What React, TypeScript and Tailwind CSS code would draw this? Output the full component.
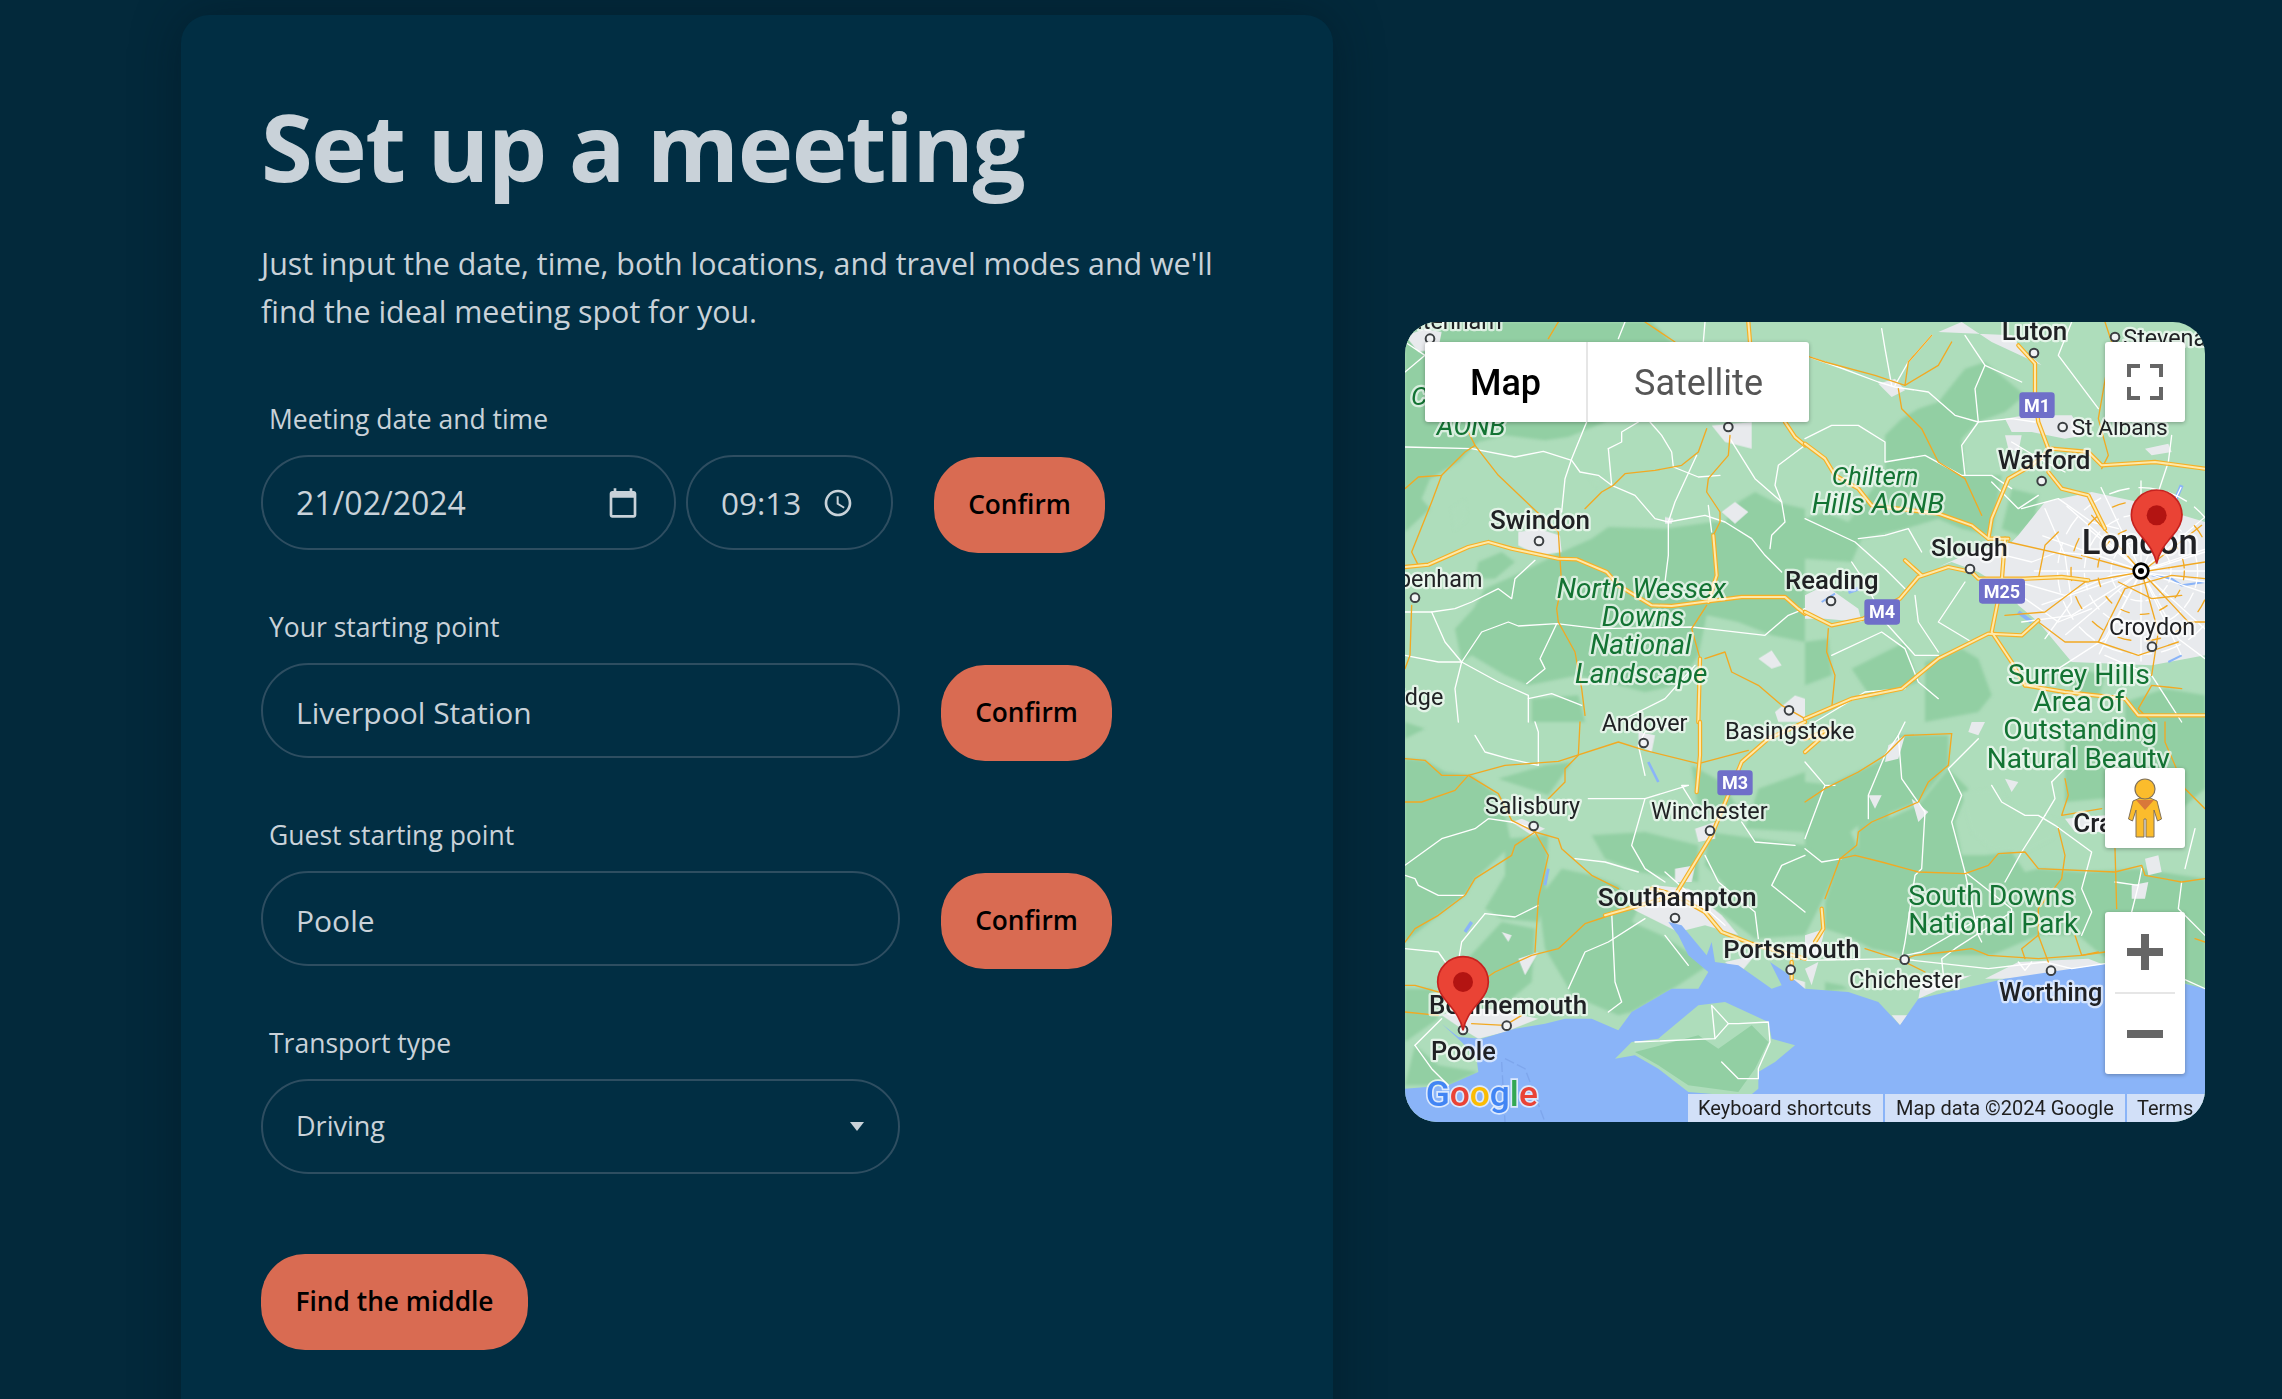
import React from 'react';

// map data is written in 3x tile coordinates, one block per quadrant (each 1200 wide)
type Quad = {
  ox: number;
  oy: number;
  dark: string[];
  light?: string[];
  urban: string[];
  minor: string[];
  sec: string[];
  motor: string[];
};

const quads: Quad[] = [
  {
    ox: 0,
    oy: 0,
    dark: [
      '0,0 740,0 800,60 800,110 600,300 490,345 420,355 300,340 220,360 160,420 75,470 50,530 75,560 0,630',
      '470,690 560,650 610,615 780,620 920,600 960,600 1000,540 1050,510 1110,540 1200,560 1200,960 1100,940 1000,900 905,880 880,1000 820,1090 720,1110 520,1060 370,1090 300,1060 200,1000 170,1020 150,920 205,860 240,800 330,760',
      '380,1130 520,1120 540,1200 380,1200',
      '220,720 290,690 330,720 270,770 210,770',
    ],
    light: ['140,560 180,535 185,590 150,625', '550,460 600,470 575,495'],
    urban: [
      '340,630 400,620 465,640 470,690 400,700 340,670',
      '950,570 990,540 1030,570 990,605',
      '0,40 60,20 110,30 100,80 40,90',
      '920,310 1040,300 1040,380 960,360',
      '1110,1170 1170,1120 1200,1130 1200,1200 1120,1200',
      '1060,1010 1100,985 1130,1030 1100,1040',
      '780,585 805,590 800,605 780,605',
    ],
    minor: [
      '0,375 200,380 330,405 415,388 500,415 525,450 580,460 620,490 690,520 750,590 790,600 900,580 960,600 1040,650 1080,700 1130,750',
      '545,300 500,410 480,470 470,570',
      '610,380 650,360 650,330 700,300',
      '610,380 620,490',
      '735,300 770,340 800,390 805,435 880,465 945,460',
      '875,400 810,540 790,600 790,700 780,780',
      '975,350 1050,470 1130,540 1140,600 1100,640 1095,680',
      '1200,370 1120,430 1110,490 1130,540',
      '910,550 920,630',
      '0,870 80,870 150,860 200,840 280,800 320,830 330,770 390,715',
      '80,870 120,960 170,1020 280,1080 370,1120 370,1200',
      '170,1020 230,930 310,900 340,912 455,905 580,920 860,915 950,925 1080,940 1150,880 1200,860',
      '455,905 405,1010 420,1040 365,1085',
      '370,1130 440,1115 530,1150',
      '640,1200 780,1130 870,1030',
      '0,1000 100,1020 170,1020 150,1100 160,1200',
      '0,150 60,100 0,60',
      '900,0 895,60',
      '660,0 640,50',
    ],
    sec: [
      '905,320 880,390 830,430 750,445 660,455 625,490 590,510 540,560',
      '975,340 970,400 910,470 905,510 945,570 945,600 925,640',
      '0,500 40,465 110,460 180,390 210,370 280,460 380,555 460,630 465,710 470,790 455,860 460,900 510,990 530,1100 540,1180',
      '110,460 80,540 20,690 40,730',
      '210,370 190,330',
      '460,0 430,50',
      '720,0 810,60',
      '900,1010 960,990 980,1050 1060,1090 1130,1150 1200,1190',
      '905,850 860,920 885,1010',
      '20,850 15,1000 0,1040',
    ],
    motor: [
      '0,735 70,728 190,675 250,660 320,680 460,710 515,712 605,750 640,790 740,850 800,852 910,838 1010,825 1140,825 1180,860 1200,875',
      '925,640 935,760 910,840',
      '885,1010 880,1200',
      '1030,0 1035,60',
      '1140,300 1170,345 1200,370',
    ],
  },
  {
    ox: 1200,
    oy: 0,
    dark: [
      '240,340 290,290 340,260 400,240 480,140 540,120 660,220 600,270 520,300 470,350 480,460 590,460 560,640 470,620 400,590 300,620 170,650 140,720 0,710 0,590 60,570 130,600 240,450',
      '360,1020 470,980 520,1010 560,1120 520,1170 360,1200',
      '0,960 70,950 80,1060 0,1090',
      '620,500 700,520 690,590 640,640 590,620',
      '960,1140 1080,1100 1200,1120 1200,1200 960,1200',
      '140,1040 300,960 340,1080 200,1130',
      '820,1040 900,1060 880,1130 800,1100',
    ],
    urban: [
      '640,640 720,540 860,510 1000,540 1200,600 1200,1000 1040,1030 800,1020 700,900 640,850 600,800 520,750 440,720 400,735 500,690 620,660',
      '600,290 660,280 800,280 840,340 780,350 680,330 620,330',
      '1020,380 1090,365 1100,390 1040,400',
      '0,820 60,790 160,860 170,900 60,890 0,890',
      '220,185 270,170 300,205 260,225',
      '400,30 470,0 560,60 710,130 650,80 620,40',
      '600,340 650,340 640,390 610,380',
    ],
    minor: [
      '230,20 240,80 260,190',
      '380,40 310,120 270,190',
      '0,100 100,135 220,180 270,195 370,210 450,280 520,300 620,290 690,300',
      '0,350 80,310 160,310 240,360 240,420 360,400 470,460 560,460 620,500',
      '540,130 510,200 520,300 470,370 480,460',
      '480,40 540,130 650,180',
      '0,590 150,660 240,740 300,800',
      '160,650 240,640 310,620 350,690',
      '140,720 180,780 240,900 330,1000 400,1000',
      '330,820 340,900 400,990',
      '480,780 400,900 500,960',
      '80,1000 230,930 300,980 340,1080 400,1130',
      '650,560 760,530 860,600 940,620',
      '720,560 780,700 800,840 720,950',
      '640,780 780,820 920,760 1010,750',
      '850,620 1010,750 1200,690',
      '1010,750 1120,950 1200,1010',
      '1010,750 900,950 760,1040',
      '1010,750 1200,780',
      '650,900 800,880 1010,750',
      '900,1000 1040,1060 1130,1200',
      '800,0 760,100 880,260',
      '1100,340 1090,420 1060,510',
      '30,1200 180,1110 300,1100',
      '600,700 680,720 760,690 860,700',
      '660,830 760,900 860,860',
      '560,480 640,560 700,520',
      '620,360 720,420 780,450',
    ],
    sec: [
      '380,40 310,120 300,190 210,160 60,120 0,100',
      '300,190 400,130 440,60',
      '280,200 290,260 350,320 400,420 480,470 530,580',
      '610,660 830,710',
      '860,580 1010,750 1190,610',
      '830,700 1010,750 1200,720',
      '700,770 720,670 760,630',
      '600,880 720,870 840,780 1010,750 1060,930 1040,1060',
      '880,960 960,800 1100,760 1200,770',
      '700,900 780,960 880,960 1000,1000 1120,960',
      '1010,750 1150,900 1200,900',
      '940,780 1040,830 1130,820',
      '70,920 65,990 90,1060 80,1160',
      '900,0 920,60 880,290 910,400 890,440',
      '1130,1100 1040,1090 1000,1160 1040,1200',
    ],
    motor: [
      '0,365 60,410 90,460 160,500 200,550 400,575 500,610 550,650 610,650',
      '0,870 80,910 175,890 285,830 340,765 430,735 500,750 520,770 660,770 770,765 850,775',
      '300,715 350,760',
      '550,650 560,590 610,470 680,430 740,380 850,390 890,430 1050,420 1200,440',
      '690,125 690,230 700,300 730,380',
      '640,70 690,125',
      '730,450 770,500 850,520 900,620',
      '600,650 590,780 560,930 620,1020 660,1090',
      '0,1190 140,1130 290,1100 400,1010 550,935 650,940 700,895',
      '660,1090 780,1110 960,1130 1000,1180 1200,1180',
    ],
  },
  {
    ox: 0,
    oy: 1200,
    dark: [
      '0,110 60,115 120,150 200,160 290,230 320,370 210,470 180,520 100,580 0,660',
      '400,530 470,440 560,460 640,490 700,560 680,600 770,640 910,730 820,790 680,870 640,880 500,820 480,780 420,680',
      '560,340 720,330 800,350 880,370 880,480 700,450 600,410',
      '910,330 1200,370 1200,640 1050,650 930,560 960,490 900,430',
      '0,800 80,800 100,890 0,960',
      '30,970 100,1030 220,1050 130,1090 0,1090',
      '280,170 420,130 500,120 430,220',
      '160,740 290,600 390,620 380,780 260,880 200,860',
      '0,0 60,20 0,50',
      '300,350 430,340 420,530 400,600 290,590 240,560 300,460',
      '860,130 950,180 1000,260 930,300 880,260',
      '1060,200 1200,150 1200,330 1020,320',
    ],
    urban: [
      '680,560 750,490 850,500 950,580 1000,640 900,610 820,630 740,590',
      '110,880 160,860 250,860 350,880 400,890 300,930 220,950 170,920',
      '320,300 350,290 420,320 380,340',
      '870,320 930,300 930,350 880,360',
      '810,440 870,430 860,480 810,480',
      '1130,760 1200,780 1200,810 1150,810',
      '700,30 750,40 740,90 700,70',
      '290,630 320,640 310,660',
      '340,710 400,690 360,760',
      '960,720 1050,700 1000,760',
    ],
    minor: [
      '210,40 240,90 310,110 400,130 400,30 390,0',
      '0,430 110,350 210,320 250,290 320,300',
      '0,460 30,470 40,490 100,520 180,520',
      '320,300 390,320',
      '550,230 720,230 850,190',
      '720,230 680,370 720,440 780,480',
      '510,410 600,420 700,450',
      '780,450 960,610',
      '1010,300 1050,360 1170,370',
      '900,400 940,480 1050,570 1060,650',
      '1200,400 1130,430 1100,490 1200,570',
      '620,570 630,780 650,840 610,870',
      '720,590 610,660 540,690 490,800',
      '240,575 170,660 160,720',
      '240,575 330,585 400,550',
      '0,680 100,690 170,790',
      '30,970 110,890',
      '780,640 850,730',
      '30,970 80,1040 130,1090',
      '850,190 830,190 880,270',
      '720,160 700,70 720,30 840,0',
      '690,960 930,950 970,905 1000,905 1090,900 1095,960 1060,1040 1060,1070 1000,1070 950,1020',
      '930,950 920,850 970,905',
    ],
    sec: [
      '0,110 60,115 110,160 190,160 280,215 320,295 390,330 430,400 400,530 390,690',
      '0,240 50,240 150,205 190,160 300,130 460,118 640,60 720,85 880,125 1030,85',
      '525,0 520,100 480,140 480,180 430,230',
      '390,330 330,370 320,400 210,470 180,520 100,580 30,620 0,660',
      '390,330 460,350 470,380 560,460 640,500',
      '600,585 540,605 460,680 380,700 270,750 210,790',
      '0,790 30,790 100,810',
      '0,870 100,880',
      '200,905 300,910 350,880',
    ],
    motor: [
      '885,0 885,100 875,210',
      '1200,0 1090,50 1010,120 920,340 810,520 600,580',
      '740,500 780,510 810,520 900,570 950,630 1040,665 1200,710',
      '1160,720 1160,770',
    ],
  },
  {
    ox: 1200,
    oy: 1200,
    dark: [
      '160,310 250,290 340,250 430,140 490,200 450,300 470,400 540,400 620,390 660,450 700,440 830,450 1000,440 1200,470 1200,800 1000,740 890,700 820,640 700,640 560,700 440,700 300,700 200,680 120,640 60,620 60,540 100,420 160,380',
      '0,370 110,410 60,520 0,640',
      '280,40 430,40 430,130 340,240 180,300 200,240 240,120',
      '0,180 90,190 0,310',
      '780,0 1200,0 1200,200 1130,260 1000,220 780,240',
      '60,780 110,790 130,800 60,810',
      '70,190 240,110 280,40 250,290 160,310 90,370 60,290',
      '0,310 70,190 160,380 100,420 0,370',
    ],
    urban: [
      '250,70 300,40 280,110 240,120',
      '190,220 230,220 210,260',
      '600,170 640,180 620,210',
      '320,230 370,270 340,300',
      '780,290 900,280 900,330 810,330',
      '1020,410 1060,400 1070,450 1030,460',
      '980,490 1030,480 1020,530 980,530',
      '640,720 850,710 900,730 700,770 540,770',
      '260,880 310,880 285,910',
      '350,780 500,760 340,830',
      '0,640 60,620 40,700 0,700',
      '0,740 40,720 20,790',
      '500,0 540,0 520,40 490,30',
    ],
    minor: [
      '280,40 240,100 190,220 190,290',
      '300,0 280,40 290,170 360,270 350,440 330,460 300,660 290,710',
      '0,350 60,190 0,120 60,190 90,190',
      '0,380 50,420 110,410',
      '520,50 430,140 470,220 440,300 480,450 520,640 530,660',
      '560,190 590,240 660,280 700,280 750,310 860,390 830,500 860,570 830,640',
      '720,280 650,390 600,480',
      '740,180 750,230 720,280',
      '790,130 740,180',
      '480,450 620,560 620,570',
      '620,570 450,680 410,710 415,760',
      '540,580 350,690 300,700',
      '930,480 1000,490 1010,440',
      '1000,490 980,570 940,610',
      '0,715 280,710 550,740 720,720 800,740 1000,710 1200,800',
      '640,720 660,745 680,720',
      '1130,480 1120,560 1200,640',
      '1170,320 1140,440',
    ],
    sec: [
      '0,240 60,200 160,150 240,100 300,40 440,35',
      '440,35 430,130 370,180 340,240 200,300 160,330 155,370 105,410',
      '105,410 60,530',
      '105,410 150,400 230,420 340,450 480,455 550,430 580,395 660,390 700,440 930,450 1010,430 1020,460 1130,480 1200,470',
      '780,170 790,220 770,280 890,260',
      '760,320 780,400 770,470 700,560 700,640 730,720',
      '930,380 935,560',
      '700,640 650,680 660,710',
      '810,640 830,700 880,690',
      '180,680 290,715 330,700 420,690 500,680 550,700 700,710 830,700 900,690',
      '290,715 360,750',
      '1080,0 1080,60 1140,200 1200,260',
      '1170,650 1200,660',
    ],
    motor: ['50,560 55,620 30,660', '0,50 80,20 0,90'],
  },
];

const sea =
  '0,2300 130,2290 220,2250 215,2210 170,2160 110,2105 160,2145 230,2150 330,2120 420,2105 480,2090 560,2090 640,2125 680,2070 800,2000 880,2000 910,1950 850,1900 820,1840 790,1800 830,1810 905,1900 920,1860 930,1920 1000,1930 1100,2000 1130,1990 1095,1920 1140,1950 1200,2000 1330,2010 1420,2040 1485,2110 1540,2030 1670,2000 1800,1970 2000,1940 2100,1925 2400,2000 2400,2400 0,2400';
const wight =
  '630,2210 680,2160 760,2150 880,2050 960,2040 1090,2100 1100,2150 1170,2170 1110,2220 1060,2250 1060,2300 1030,2325 850,2310 760,2240 690,2200';

type Label = { t: string; x: number; y: number; s?: number; w?: number; a?: 'end'; c?: string; i?: boolean };

const GREEN = '#137333';
const labels: Label[] = [
  { t: 'Cheltenham', x: 290, y: 20, s: 70, a: 'end' },
  { t: 'Swindon', x: 255, y: 620, s: 78, w: 500 },
  { t: 'Chippenham', x: 232, y: 795, s: 70, a: 'end' },
  { t: 'Trowbridge', x: 115, y: 1150, s: 70, a: 'end' },
  { t: 'Andover', x: 590, y: 1228, s: 70 },
  { t: 'C', x: 18, y: 250, s: 78, c: GREEN, i: true },
  { t: 'AONB', x: 95, y: 338, s: 80, c: GREEN, i: true },
  { t: 'North Wessex', x: 455, y: 828, s: 84, c: GREEN, i: true },
  { t: 'Downs', x: 590, y: 912, s: 84, c: GREEN, i: true },
  { t: 'National', x: 555, y: 997, s: 84, c: GREEN, i: true },
  { t: 'Landscape', x: 510, y: 1082, s: 84, c: GREEN, i: true },
  { t: 'Reading', x: 1140, y: 800, s: 77, w: 500 },
  { t: 'Luton', x: 1790, y: 55, s: 78, w: 500 },
  { t: 'Stevenage', x: 2155, y: 72, s: 70 },
  { t: 'St Albans', x: 2000, y: 340, s: 68 },
  { t: 'Watford', x: 1778, y: 440, s: 78, w: 500 },
  { t: 'Chiltern', x: 1280, y: 488, s: 78, c: GREEN, i: true },
  { t: 'Hills AONB', x: 1220, y: 573, s: 84, c: GREEN, i: true },
  { t: 'Slough', x: 1578, y: 703, s: 74, w: 500 },
  { t: 'London', x: 2030, y: 697, s: 104, w: 500 },
  { t: 'Croydon', x: 2112, y: 940, s: 70 },
  { t: 'Surrey Hills', x: 1808, y: 1085, s: 85, c: GREEN },
  { t: 'Area of', x: 1885, y: 1168, s: 85, c: GREEN },
  { t: 'Outstanding', x: 1795, y: 1252, s: 85, c: GREEN },
  { t: 'Natural Beauty', x: 1745, y: 1337, s: 84, c: GREEN },
  { t: 'Salisbury', x: 240, y: 1477, s: 70 },
  { t: 'Winchester', x: 738, y: 1492, s: 70 },
  { t: 'Basingstoke', x: 960, y: 1252, s: 71 },
  { t: 'Southampton', x: 578, y: 1752, s: 79, w: 500 },
  { t: 'Portsmouth', x: 955, y: 1907, s: 77, w: 500 },
  { t: 'Bournemouth', x: 72, y: 2075, s: 78, w: 500 },
  { t: 'Poole', x: 78, y: 2214, s: 76, w: 500 },
  { t: 'Cra', x: 2005, y: 1530, s: 78, w: 500 },
  { t: 'South Downs', x: 1510, y: 1750, s: 85, c: GREEN },
  { t: 'National Park', x: 1510, y: 1834, s: 85, c: GREEN },
  { t: 'Chichester', x: 1332, y: 1998, s: 71 },
  { t: 'Worthing', x: 1782, y: 2037, s: 76, w: 500 },
];

const dots: [number, number][] = [
  [402, 657], [30, 827], [75, 50], [970, 315], [1152, 1165], [716, 1263], [1887, 93], [1973, 315],
  [2130, 45], [1910, 477], [1695, 741], [1278, 837], [2241, 974], [386, 1512], [915, 1526], [810, 1788],
  [305, 2111], [174, 2124], [1157, 1943], [1499, 1913], [1938, 1946],
];

const shields: [string, number, number, number, number][] = [
  ['M1', 1843, 211, 106, 77],
  ['M25', 1722, 770, 138, 75],
  ['M4', 1378, 832, 107, 76],
  ['M3', 937, 1345, 106, 75],
];

// streets around central London: spokes out of the centre and broken rings
const LON = { x: 2208, y: 747 };
const spokes = [0, 22, 47, 68, 90, 113, 135, 158, 180, 203, 226, 248, 270, 292, 315, 338];

function Pin({ x, y }: { x: number; y: number }) {
  return (
    <g transform={`translate(${x},${y})`}>
      <path
        d="M0 0C-6 -32 -22 -55 -48 -85C-66 -105 -76 -122 -76 -145A76 76 0 1 1 76 -145C76 -122 66 -105 48 -85C22 -55 6 -32 0 0Z"
        fill="#ea4335"
        stroke="#c5221f"
        strokeWidth={5}
      />
      <circle cy={-145} r={30} fill="#b31412" />
    </g>
  );
}

function MapTiles() {
  return (
    <svg viewBox="0 0 2400 2400" className="block h-[800px] w-[800px] bg-[#aeddbb]">
      <defs>
        <filter id="soft" x="-2%" y="-2%" width="104%" height="104%">
          <feGaussianBlur stdDeviation="5" />
        </filter>
      </defs>
      <g filter="url(#soft)">
        {quads.map((q, i) => (
          <g key={i} transform={`translate(${q.ox},${q.oy})`} fill="#92cfa3">
            {q.dark.map((p, j) => (
              <polygon key={j} points={p} />
            ))}
            {q.light?.map((p, j) => (
              <polygon key={j} points={p} fill="#aeddbb" />
            ))}
          </g>
        ))}
        <polygon points="1670,1410 1780,1400 1840,1480 1920,1480 1980,1500 1940,1550 1860,1590 1760,1580 1700,1530" fill="#aeddbb" />
      </g>
      {quads.map((q, i) => (
        <g key={i} transform={`translate(${q.ox},${q.oy})`} fill="#e8eaed">
          {q.urban.map((p, j) => (
            <polygon key={j} points={p} />
          ))}
        </g>
      ))}
      <polygon points={sea} fill="#8ab4f8" />
      <polygon points={wight} fill="#aeddbb" />
      <polygon points="690,2190 880,2140 940,2180 1040,2110 1090,2160 1050,2240 1000,2310 850,2290 760,2230" fill="#92cfa3" />
      <g fill="none" stroke="#8ab4f8" strokeWidth={6}>
        <polyline points="2330,490 2300,560" strokeWidth={12} />
        <polyline points="1880,900 1840,870" strokeWidth={12} />
        <polyline points="1250,840 1290,815" />
        <polyline points="1330,810 1360,800" strokeWidth={12} />
        <polyline points="180,1830 200,1800" strokeWidth={10} />
        <polyline points="430,1640 420,1690" strokeWidth={8} />
        <polyline points="730,1320 760,1380" strokeWidth={8} />
        <polyline points="2330,1000 2290,1020" />
        <polyline points="2240,760 2300,770 2330,790 2400,780" />
      </g>
      <g fill="none" stroke="#7ea6ec" strokeWidth={4} strokeDasharray="30 10">
        <polyline points="290,2220 300,2400" />
        <polyline points="300,2210 360,2240 420,2400" />
      </g>
      <g fill="none" stroke="#ffffff" strokeWidth={4} strokeLinejoin="round" strokeLinecap="round">
        {quads.map((q, i) => (
          <g key={i} transform={`translate(${q.ox},${q.oy})`}>
            {q.minor.map((p, j) => (
              <polyline key={j} points={p} />
            ))}
          </g>
        ))}
        {spokes.map((a) => (
          <line
            key={a}
            x1={LON.x}
            y1={LON.y}
            x2={LON.x + Math.cos((a * Math.PI) / 180) * 320}
            y2={LON.y + Math.sin((a * Math.PI) / 180) * 270}
          />
        ))}
        <circle cx={LON.x} cy={LON.y} r={90} strokeDasharray="34 12" />
        <circle cx={LON.x} cy={LON.y} r={170} strokeDasharray="50 18" />
        <circle cx={LON.x} cy={LON.y} r={250} strokeDasharray="60 30" />
      </g>
      <g fill="none" stroke="#f2a922" strokeWidth={4} strokeLinejoin="round" strokeLinecap="round">
        {quads.map((q, i) => (
          <g key={i} transform={`translate(${q.ox},${q.oy})`}>
            {q.sec.map((p, j) => (
              <polyline key={j} points={p} />
            ))}
          </g>
        ))}
        <circle cx={LON.x} cy={LON.y} r={130} strokeDasharray="26 34" />
        <circle cx={LON.x} cy={LON.y} r={210} strokeDasharray="40 50" />
      </g>
      <g fill="none" strokeLinejoin="round" strokeLinecap="round">
        {quads.map((q, i) => (
          <g key={i} transform={`translate(${q.ox},${q.oy})`}>
            {q.motor.map((p, j) => (
              <polyline key={j} points={p} stroke="#f6b026" strokeWidth={13} />
            ))}
            {q.motor.map((p, j) => (
              <polyline key={j} points={p} stroke="#fde9a9" strokeWidth={6} />
            ))}
          </g>
        ))}
      </g>
      {shields.map(([t, x, y, w, h]) => (
        <g key={t}>
          <rect x={x} y={y} width={w} height={h} rx={10} fill="#6f6fc9" />
          <text x={x + w / 2} y={y + h / 2 + 19} textAnchor="middle" fontSize={54} fontWeight={700} fill="#ffffff" fontFamily="Roboto, sans-serif">
            {t}
          </text>
        </g>
      ))}
      {labels.map((l) => (
        <text
          key={l.t + l.x}
          x={l.x}
          y={l.y}
          textAnchor={l.a}
          fontSize={l.s}
          fontWeight={l.w ?? 400}
          fontStyle={l.i ? 'italic' : undefined}
          fill={l.c ?? '#202124'}
          stroke="#ffffff"
          strokeOpacity={0.65}
          strokeWidth={14}
          strokeLinejoin="round"
          paintOrder="stroke"
          fontFamily="Roboto, sans-serif"
        >
          {l.t}
        </text>
      ))}
      {dots.map(([x, y]) => (
        <circle key={`${x}-${y}`} cx={x} cy={y} r={13} fill="#f1f3f4" stroke="#3c4043" strokeWidth={6} />
      ))}
      <circle cx={LON.x} cy={LON.y} r={22} fill="#ffffff" stroke="#000000" strokeWidth={8} />
      <circle cx={LON.x} cy={LON.y} r={9} fill="#000000" />
      <Pin x={2255} y={725} />
      <Pin x={174} y={2125} />
      <text x={62} y={2351} fontSize={106} fontWeight={500} fontFamily="Roboto, sans-serif" stroke="#ffffff" strokeOpacity={0.7} strokeWidth={10} paintOrder="stroke">
        <tspan fill="#4285f4">G</tspan>
        <tspan fill="#ea4335">o</tspan>
        <tspan fill="#fbbc04">o</tspan>
        <tspan fill="#4285f4">g</tspan>
        <tspan fill="#34a853">l</tspan>
        <tspan fill="#ea4335">e</tspan>
      </text>
    </svg>
  );
}

function Field({ label, children }: { label: string; children: React.ReactNode }) {
  return (
    <div className="flex h-[208px] flex-col">
      <label className="ml-[8px] h-[66px] pt-[6px] text-[26.5px] leading-[48px]">{label}</label>
      {children}
    </div>
  );
}

function ConfirmButton({ children = 'Confirm', className = '' }: { children?: string; className?: string }) {
  return (
    <button className={`h-[96px] shrink-0 rounded-[44px] bg-[#d96b52] text-[26.3px] font-semibold text-black ${className}`}>
      {children}
    </button>
  );
}

function Pill({ className = '', children }: { className?: string; children: React.ReactNode }) {
  return (
    <div className={`flex h-[95px] items-center rounded-[48px] border-2 border-[#2e4e61] px-[33px] ${className}`}>{children}</div>
  );
}

export default function App() {
  return (
    <div className="flex h-[1399px] items-start overflow-hidden bg-[#03293b] pl-[181px] pt-[15px] font-['Open_Sans',sans-serif] text-[#c9d2d9]">
      {/* Form card */}
      <div className="h-[1500px] w-[1152px] shrink-0 rounded-t-[28px] bg-[#012e43] pl-[80px] shadow-[0_0_50px_rgba(0,20,30,0.45)]">
        <h1 className="mt-[71px] text-[94px] font-bold leading-[120px] tracking-[-0.016em]">Set up a meeting</h1>
        <p className="mt-[34px] w-[1000px] text-[30.4px] leading-[48px]">
          Just input the date, time, both locations, and travel modes and we'll find the ideal meeting spot for you.
        </p>
        <div className="mt-[53px] flex flex-col">
          <Field label="Meeting date and time">
            <div className="flex items-start">
              <Pill className="w-[415px] justify-between !pr-[35px] text-[32px]">
                <span>21/02/2024</span>
                <svg viewBox="0 0 24 24" className="h-[32px] w-[32px] fill-[#c9d2d9]">
                  <path d="M20 3h-1V1h-2v2H7V1H5v2H4c-1.1 0-2 .9-2 2v16c0 1.1.9 2 2 2h16c1.1 0 2-.9 2-2V5c0-1.1-.9-2-2-2zm0 18H4V8h16v13z" />
                </svg>
              </Pill>
              <Pill className="ml-[10px] w-[207px] justify-between !pr-[37px] text-[31.5px]">
                <span>09:13</span>
                <svg viewBox="0 0 24 24" className="h-[32px] w-[32px] fill-[#c9d2d9]">
                  <path d="M11.99 2C6.47 2 2 6.48 2 12s4.47 10 9.99 10C17.52 22 22 17.52 22 12S17.52 2 11.99 2zM12 20c-4.42 0-8-3.58-8-8s3.58-8 8-8 8 3.58 8 8-3.58 8-8 8zm.5-13H11v6l5.25 3.15.75-1.23-4.5-2.67z" />
                </svg>
              </Pill>
              <ConfirmButton className="ml-[41px] mt-[2px] w-[171px]" />
            </div>
          </Field>
          <Field label="Your starting point">
            <div className="flex items-start">
              <Pill className="w-[639px] text-[30px]">
                <span className="pt-[4px]">Liverpool Station</span>
              </Pill>
              <ConfirmButton className="ml-[41px] mt-[2px] w-[171px]" />
            </div>
          </Field>
          <Field label="Guest starting point">
            <div className="flex items-start">
              <Pill className="w-[639px] text-[30px]">
                <span className="pt-[4px]">Poole</span>
              </Pill>
              <ConfirmButton className="ml-[41px] mt-[2px] w-[171px]" />
            </div>
          </Field>
          <Field label="Transport type">
            <Pill className="w-[639px] justify-between pr-[34px] text-[27px]">
              <span>Driving</span>
              <span className="h-0 w-0 border-x-[7.5px] border-t-[9px] border-x-transparent border-t-[#c9d2d9]" />
            </Pill>
          </Field>
        </div>
        <ConfirmButton className="mt-[33px] w-[267px]">Find the middle</ConfirmButton>
      </div>

      {/* Map */}
      <div className="relative ml-[72px] mt-[307px] h-[800px] w-[800px] shrink-0 overflow-hidden rounded-[32px] font-['Roboto',sans-serif]">
        <MapTiles />
        <div className="absolute left-[20px] top-[20px] flex h-[80px] rounded-[3px] bg-white shadow-[0_1px_4px_rgba(0,0,0,0.3)]">
          <button className="w-[163px] border-r-2 border-[#e6e6e6] pt-[2px] text-[36px] font-medium text-black">Map</button>
          <button className="w-[221px] pt-[2px] text-[36px] text-[#565656]">Satellite</button>
        </div>
        <button className="absolute left-[700px] top-[20px] flex h-[80px] w-[80px] items-center justify-center rounded-[3px] bg-white shadow-[0_1px_4px_rgba(0,0,0,0.3)]">
          <svg viewBox="0 0 36 36" className="h-[36px] w-[36px]" fill="none" stroke="#666666" strokeWidth={4}>
            <path d="M2 13V2H13M23 2H34V13M34 23V34H23M13 34H2V23" />
          </svg>
        </button>
        <button className="absolute left-[700px] top-[446px] flex h-[80px] w-[80px] items-center justify-center rounded-[3px] bg-white shadow-[0_1px_4px_rgba(0,0,0,0.3)]">
          <svg viewBox="0 0 34 60" className="h-[60px] w-[34px]">
            <path d="M12 20H22L29 23L33.5 41L29.5 43L26 32V59H18V41H16V59H8V32L4.5 43L0.5 41L5 23Z" fill="#fbbc2c" stroke="#80715a" strokeWidth={1} />
            <circle cx={17} cy={11} r={10} fill="#fbbc2c" stroke="#80715a" strokeWidth={1.2} />
            <path d="M8 22H26L17 32Z" fill="#d9783a" />
          </svg>
        </button>
        <div className="absolute left-[700px] top-[590px] flex h-[162px] w-[80px] flex-col items-center rounded-[3px] bg-white shadow-[0_1px_4px_rgba(0,0,0,0.3)]">
          <div className="flex h-[80px] items-center justify-center">
            <svg viewBox="0 0 36 36" className="h-[36px] w-[36px]" fill="#666666">
              <path d="M14 0H22V14H36V22H22V36H14V22H0V14H14Z" />
            </svg>
          </div>
          <div className="h-[2px] w-[60px] bg-[#e6e6e6]" />
          <div className="flex h-[80px] items-center justify-center">
            <div className="h-[8px] w-[36px] bg-[#666666]" />
          </div>
        </div>
        <div className="absolute bottom-0 right-0 flex h-[28px] gap-[2px] text-[20px] leading-[28px] text-[#1f1f1f]">
          <span className="w-[195px] bg-[#d2e0f8] pl-[10px]">Keyboard shortcuts</span>
          <span className="w-[240px] bg-[#d2e0f8] pl-[11px]">Map data ©2024 Google</span>
          <span className="w-[78px] bg-[#d2e0f8] pl-[10px]">Terms</span>
        </div>
      </div>
    </div>
  );
}
